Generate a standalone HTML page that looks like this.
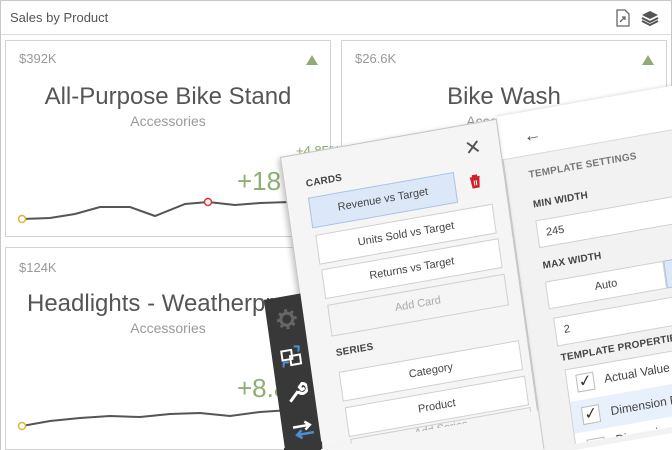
<!DOCTYPE html>
<html style="width:672px;height:450px;overflow:hidden"><head><meta charset="utf-8"><style>
*{box-sizing:border-box;margin:0;padding:0}
body{width:672px;height:450px;overflow:hidden;background:#fff;font-family:"Liberation Sans",sans-serif;position:relative}
.a{position:absolute;white-space:nowrap}
.clip{left:0;top:0;width:672px;height:450px;overflow:hidden}
.frame{left:0;top:0;width:672px;height:450px;border:1px solid #c8c8c8;border-bottom:none}
.card{background:#fff;border:1px solid #d2d2d2}
.val{font-size:13px;color:#999}
.ttl{font-size:24px;color:#555;text-align:center;white-space:nowrap}
.sub{font-size:14px;color:#9a9a9a;text-align:center}
.g{color:#8fae72}
.ov{left:280px;top:157px;width:0;height:0;transform:matrix(0.985,-0.174,0.14,0.99,0,0);transform-origin:0 0}
.lp{left:0;top:0;width:220px;height:295px;background:#f5f5f5;border:1px solid #c4c4c4;border-bottom:none;box-shadow:-2px 2px 6px rgba(0,0,0,.25)}
.rp{left:220px;top:-2px;width:380px;height:336px;background:#f2f2f2;border-left:1px solid #ccc;box-shadow:0 0 4px rgba(0,0,0,.2)}
.hd{left:220px;top:-2px;width:380px;height:44px;background:#fff;border-bottom:1px solid #d8d8d8}
.lbl{font-size:10px;font-weight:bold;color:#444;letter-spacing:.2px}
.btn{background:#fff;border:1px solid #d0d0d0;font-size:11px;color:#444;text-align:center;line-height:29px}
.sb{left:-36px;top:138px;width:37px;height:150px;background:#383838}
</style></head><body>
<div class="a clip">
<div class="a frame"></div>
<div class="a" style="left:1px;top:34px;width:670px;height:1px;background:#ddd"></div>
<div class="a" style="left:10px;top:10px;font-size:13px;color:#555">Sales by Product</div>
<svg class="a" style="left:615px;top:9px" width="16" height="18" viewBox="0 0 16 18"><path d="M2 1h8l4 4v12H2z" fill="#fff" stroke="#666" stroke-width="1.3"/><path d="M5 13l5-5M7 8h3v3" stroke="#666" fill="none" stroke-width="1.3"/></svg>
<svg class="a" style="left:640px;top:10px" width="20" height="16" viewBox="0 0 20 16"><path d="M2 5l8-4 8 4-8 4z" fill="#555"/><path d="M2 8l8 4 8-4M2 11l8 4 8-4" stroke="#555" stroke-width="2" fill="none"/></svg>

<div class="a card" style="left:5px;top:40px;width:326px;height:197px"></div>
<div class="a card" style="left:341px;top:40px;width:326px;height:197px"></div>
<div class="a card" style="left:5px;top:247px;width:326px;height:203px"></div>
<div class="a card" style="left:341px;top:247px;width:326px;height:203px"></div>

<div class="a val" style="left:19px;top:51px">$392K</div>
<div class="a" style="left:306px;top:55px;width:0;height:0;border-left:6px solid transparent;border-right:6px solid transparent;border-bottom:10px solid #8fae72"></div>
<div class="a ttl" style="left:5px;top:83px;width:326px">All-Purpose Bike Stand</div>
<div class="a sub" style="left:5px;top:113px;width:326px">Accessories</div>
<div class="a g" style="left:296px;top:143px;font-size:13px">+4.85%</div>
<div class="a g" style="left:237px;top:166px;font-size:26px">+18</div>
<svg class="a" style="left:0;top:190px" width="300" height="40"><polyline points="22,29 50,28 75,24 100,17 130,17 155,26 185,14 208,12 235,15 260,13 290,12" fill="none" stroke="#555" stroke-width="2"/><circle cx="22" cy="29" r="3.5" fill="#fff" stroke="#e8b030" stroke-width="1.5"/><circle cx="208" cy="12" r="3.5" fill="#fff" stroke="#d33" stroke-width="1.5"/></svg>

<div class="a val" style="left:355px;top:51px">$26.6K</div>
<div class="a" style="left:642px;top:55px;width:0;height:0;border-left:6px solid transparent;border-right:6px solid transparent;border-bottom:10px solid #8fae72"></div>
<div class="a ttl" style="left:341px;top:83px;width:326px">Bike Wash</div>
<div class="a sub" style="left:341px;top:113px;width:326px">Accessories</div>

<div class="a val" style="left:19px;top:260px">$124K</div>
<div class="a ttl" style="left:27px;top:290px;text-align:left">Headlights - Weatherproof</div>
<div class="a sub" style="left:5px;top:320px;width:326px">Accessories</div>
<div class="a g" style="left:237px;top:373px;font-size:26px">+8.8</div>
<svg class="a" style="left:0;top:400px" width="300" height="40"><polyline points="22,26 50,21 80,18 110,16 140,17 170,14 200,13 230,16 260,12 290,10" fill="none" stroke="#555" stroke-width="2"/><circle cx="22" cy="26" r="3.5" fill="#fff" stroke="#e8b030" stroke-width="1.5"/></svg>

<div class="a ov">
 <div class="a rp"></div>
 <div class="a hd"></div>
 <div class="a lp"></div>
 <div class="a sb"></div>
 <svg class="a" style="left:-27px;top:150px" width="22" height="22" viewBox="0 0 22 22"><circle cx="11" cy="11" r="6" fill="none" stroke="#666" stroke-width="3"/><path d="M11 1v4M11 17v4M1 11h4M17 11h4M4 4l3 3M15 15l3 3M4 18l3-3M15 7l3-3" stroke="#666" stroke-width="3"/></svg>
 <svg class="a" style="left:-28px;top:187px" width="24" height="24" viewBox="0 0 24 24"><rect x="2" y="5" width="10" height="9" fill="none" stroke="#fff" stroke-width="2"/><rect x="10" y="11" width="10" height="9" fill="none" stroke="#fff" stroke-width="2"/><path d="M15 2l5 1-1 5M2 21l1-5 5 1" stroke="#4a90d9" stroke-width="2" fill="none"/></svg>
 <svg class="a" style="left:-27px;top:224px" width="22" height="22" viewBox="0 0 22 22"><path d="M3 19l9-9M12 10a5 5 0 1 0 5-7l-3 3 2 3 3-1" stroke="#fff" stroke-width="3" fill="none"/></svg>
 <svg class="a" style="left:-27px;top:262px" width="24" height="22" viewBox="0 0 24 22"><path d="M2 7h16M14 3l5 4-5 4" stroke="#fff" stroke-width="2.5" fill="none"/><path d="M22 15H6M10 11l-5 4 5 4" stroke="#4a90d9" stroke-width="2.5" fill="none"/></svg>

 <div class="a" style="left:184px;top:12px;font-size:20px;color:#555">✕</div>
 <div class="a lbl" style="left:22px;top:26px">CARDS</div>
 <div class="a btn" style="left:22px;top:45px;width:148px;height:31px;background:#dce8f8;border-color:#a9c4e6">Revenue vs Target</div>
 <svg class="a" style="left:184px;top:51px" width="12" height="14" viewBox="0 0 12 14"><path d="M1 3h10M4 3V1h4v2M2 4h8l-1 9H3z" stroke="#d0202a" fill="#d0202a" stroke-width="1.3"/><path d="M5 6v5M7 6v5" stroke="#fff"/></svg>
 <div class="a btn" style="left:24px;top:83px;width:180px;height:30px">Units Sold vs Target</div>
 <div class="a btn" style="left:25px;top:118px;width:180px;height:30px">Returns vs Target</div>
 <div class="a btn" style="left:26px;top:154px;width:180px;height:32px;background:#f5f5f5;color:#aaa">Add Card</div>
 <div class="a lbl" style="left:28px;top:198px">SERIES</div>
 <div class="a btn" style="left:28px;top:222px;width:183px;height:30px">Category</div>
 <div class="a btn" style="left:29px;top:258px;width:183px;height:30px">Product</div>
 <div class="a btn" style="left:30px;top:290px;width:183px;height:10px;background:#f5f5f5;color:#aaa;line-height:10px;overflow:hidden;border-bottom:none">Add Series</div>

 <div class="a" style="left:244px;top:12px;font-size:18px;color:#555">←</div>
 <div class="a lbl" style="left:244px;top:56px;color:#777">TEMPLATE SETTINGS</div>
 <div class="a lbl" style="left:244px;top:86px">MIN WIDTH</div>
 <div class="a btn" style="left:244px;top:107px;width:200px;height:28px;text-align:left;padding-left:8px;line-height:26px">245</div>
 <div class="a lbl" style="left:245px;top:148px">MAX WIDTH</div>
 <div class="a btn" style="left:245px;top:169px;width:120px;height:28px;line-height:26px">Auto</div>
 <div class="a" style="left:365px;top:169px;width:80px;height:28px;background:#dce8f8;border:1px solid #a9c4e6"></div>
 <div class="a btn" style="left:248px;top:206px;width:200px;height:29px;text-align:left;padding-left:8px;line-height:27px">2</div>
 <div class="a lbl" style="left:250px;top:242px">TEMPLATE PROPERTIES</div>
 <div class="a" style="left:252px;top:259px;width:200px;height:81px;background:#fff;border:1px solid #d0d0d0;border-bottom:none"></div>
 <div class="a" style="left:253px;top:292px;width:199px;height:32px;background:#e8f0fb"></div>
 <div class="a" style="left:262px;top:266px;width:18px;height:18px;border:1px solid #bbb;background:#fff;font-size:16px;line-height:16px;text-align:center;color:#333">✓</div>
 <div class="a" style="left:290px;top:268px;font-size:12px;color:#444">Actual Value</div>
 <div class="a" style="left:263px;top:299px;width:18px;height:18px;border:1px solid #bbb;background:#fff;font-size:16px;line-height:16px;text-align:center;color:#333">✓</div>
 <div class="a" style="left:292px;top:301px;font-size:12px;color:#444">Dimension Property</div>
 <div class="a" style="left:264px;top:332px;width:18px;height:7px;border:1px solid #bbb;border-bottom:none;background:#fff"></div>
 <div class="a" style="left:293px;top:330px;height:9px;overflow:hidden;font-size:12px;line-height:14px;color:#444">Dimension Category</div>
</div>
<svg class="a" style="left:0;top:0" width="672" height="450">
 <polygon points="284,448 322,441.5 322.5,450 284,450" fill="#383838"/>
 <polygon points="321,449 538,410.5 543.5,449 543.5,450 321,450" fill="#f5f5f5"/>
 <polygon points="538,410.5 543.5,449.4 544.5,449.4 539,410.5" fill="#ccc"/>
 <polygon points="543.5,449.4 672,427 672,450 543.5,450" fill="#f2f2f2"/>
 <polygon points="576,450 672,433 672,450" fill="#fff"/>
</svg>
</div>
</body></html>
